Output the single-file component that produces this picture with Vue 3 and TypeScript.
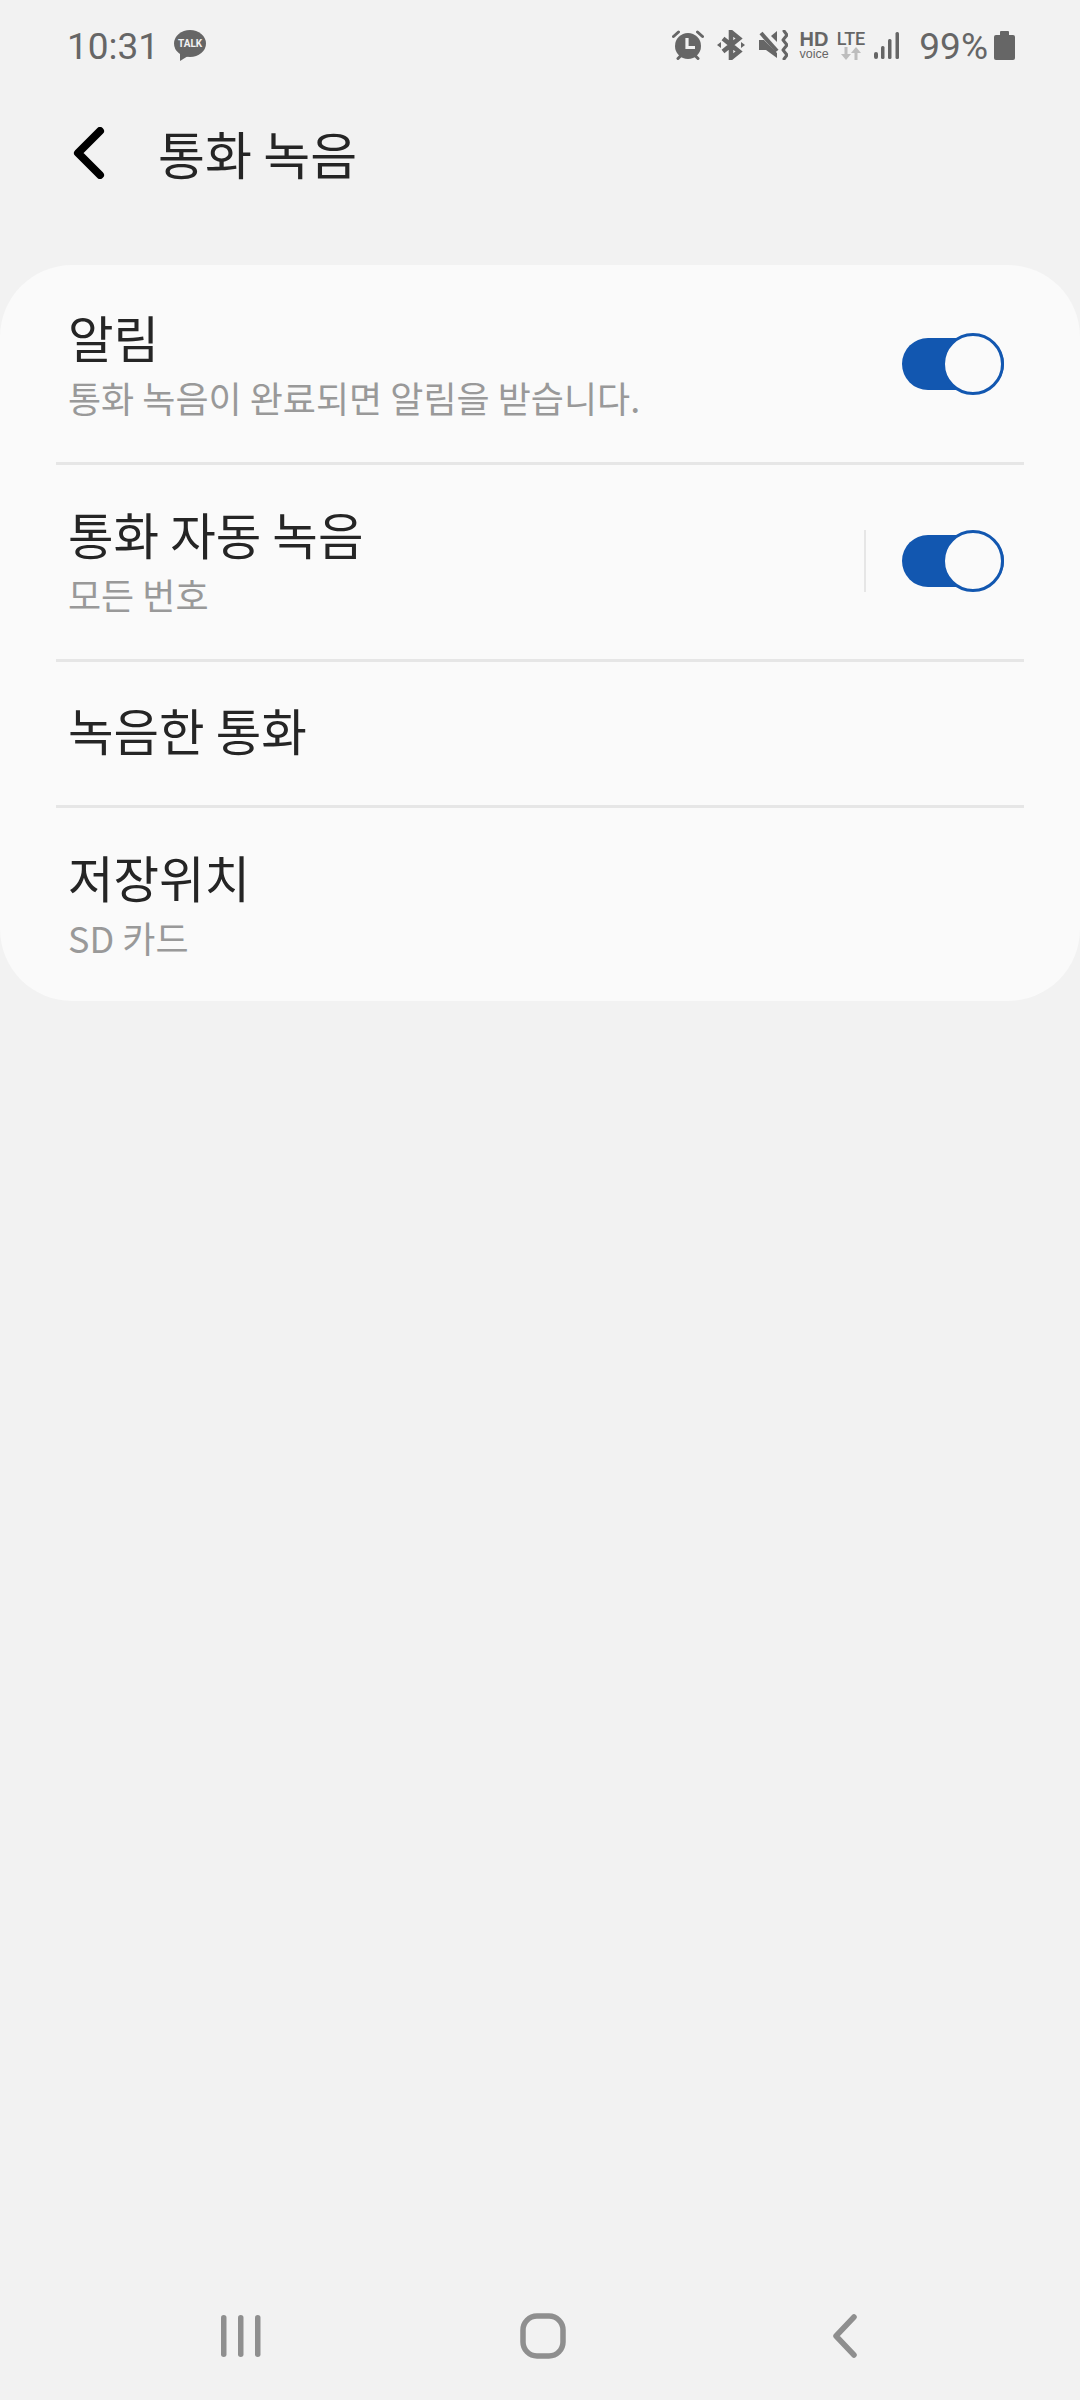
<script setup lang="ts">
// Call recording settings screen
interface SettingRow {
  title: string
  sub?: string
  toggle?: boolean
  split?: boolean
  height: number
}

const rows: SettingRow[] = [
  { title: '알림', sub: '통화 녹음이 완료되면 알림을 받습니다.', toggle: true, height: 197 },
  { title: '통화 자동 녹음', sub: '모든 번호', toggle: true, split: true, height: 197 },
  { title: '녹음한 통화', height: 146 },
  { title: '저장위치', sub: 'SD 카드', height: 196 },
]
</script>

<template>
  <div class="screen">
    <div class="status">
      <span class="time">10:31</span>
      <span class="talk">
        <svg width="32" height="31" viewBox="0 0 32 31">
          <ellipse cx="16" cy="13.5" rx="16" ry="13.5" fill="#666" />
          <path d="M6 23l0 8 8-5z" fill="#666" />
        </svg>
        <span class="talk-text">TALK</span>
      </span>
      <span class="spacer"></span>

      <svg class="ic-alarm" width="32" height="30" viewBox="0 0 32 30" fill="#666">
        <circle cx="16" cy="16" r="13" />
        <path d="M1.5 6.5l5-4.5M30.5 6.5l-5-4.5M6 28.5l3-3M26 28.5l-3-3" stroke="#666" stroke-width="3" stroke-linecap="round" />
        <path d="M15 8v9.5h8" fill="none" stroke="#f2f2f2" stroke-width="3.2" />
      </svg>
      <svg class="ic-bt" width="28" height="30" viewBox="0 0 28 30">
        <path d="M6 8.5l16 13-8 6.5V2l8 6.5-16 13" fill="none" stroke="#666" stroke-width="4.6" />
        <path d="M0 15l4-3v6zM28 15l-4-3v6z" fill="#666" />
      </svg>
      <svg class="ic-mute" width="29" height="30" viewBox="0 0 29 30" fill="#666">
        <path d="M0 10h5l13 13v5L7 20H0z" />
        <path d="M12 6l6-5v11z" />
        <path d="M2 3l16 18" stroke="#666" stroke-width="4" />
        <path d="M25 1l3 4-4 5 4 5-4 5 4 5-3 4" fill="none" stroke="#666" stroke-width="3" stroke-linecap="round" stroke-linejoin="round" />
      </svg>
      <span class="hd">
        <span class="hd-top">HD</span>
        <span class="hd-sub">voice</span>
      </span>
      <span class="lte">
        <span class="lte-top">LTE</span>
        <svg width="22" height="13" viewBox="0 0 22 13" fill="#bdbdbd" stroke="#bdbdbd" stroke-width="3">
          <path d="M6 0v8" />
          <path d="M1 7h10l-5 6z" stroke="none" />
          <path d="M16 13V5" />
          <path d="M11 6h10l-5-6z" stroke="none" />
        </svg>
      </span>
      <svg class="ic-signal" width="25" height="27" viewBox="0 0 25 27" fill="#666">
        <rect x="0" y="20" width="4" height="7" rx="2" />
        <rect x="7" y="14" width="3.5" height="13" rx="1.5" />
        <rect x="14" y="7" width="3.5" height="20" rx="1.5" />
        <rect x="21.5" y="0" width="3.5" height="27" rx="1.5" />
      </svg>
      <span class="pct">99%</span>
      <svg class="ic-batt" width="21" height="29" viewBox="0 0 21 29" fill="#666">
        <rect x="0" y="4" width="21" height="25" rx="2" />
        <rect x="6" y="0" width="9" height="5" rx="1" />
      </svg>
    </div>

    <div class="appbar">
      <svg class="back" width="34" height="52" viewBox="0 0 34 52">
        <path d="M28 4L6 26l22 22" fill="none" stroke="#000" stroke-width="8" stroke-linecap="round" stroke-linejoin="round" />
      </svg>
      <span class="page-title">통화 녹음</span>
    </div>

    <div class="card">
      <div
        v-for="(row, i) in rows"
        :key="row.title"
        class="row"
        :class="{ 'row--single': !row.sub }"
        :style="{ height: row.height + 'px' }"
      >
        <div v-if="i > 0" class="divider"></div>
        <div class="labels">
          <div class="title">{{ row.title }}</div>
          <div v-if="row.sub" class="sub">{{ row.sub }}</div>
        </div>
        <div v-if="row.split" class="split"></div>
        <div v-if="row.toggle" class="toggle">
          <span class="thumb"></span>
        </div>
      </div>
    </div>

    <div class="navbar">
      <svg class="nav-recent" width="52" height="44" viewBox="0 0 52 44" fill="#8f8f8f">
        <rect x="2" y="1" width="5.5" height="42" rx="2.75" />
        <rect x="19" y="1" width="5.5" height="42" rx="2.75" />
        <rect x="36" y="1" width="5.5" height="42" rx="2.75" />
      </svg>
      <svg class="nav-home" width="46" height="46" viewBox="0 0 46 46">
        <rect x="3" y="3" width="40" height="40" rx="14" fill="none" stroke="#8f8f8f" stroke-width="5.5" />
      </svg>
      <svg class="nav-back" width="26" height="44" viewBox="0 0 26 44">
        <path d="M22 3L4 22l18 19" fill="none" stroke="#8f8f8f" stroke-width="5.5" stroke-linecap="round" stroke-linejoin="round" />
      </svg>
    </div>
  </div>
</template>

<style>
html,
body {
  margin: 0;
  background: #f2f2f2;
}
</style>

<style scoped>
.screen {
  position: relative;
  display: flex;
  flex-direction: column;
  width: 1080px;
  height: 2400px;
  background: #f2f2f2;
  font-family: "Noto Sans CJK KR", "Noto Sans", sans-serif;
  overflow: hidden;
}
.status {
  display: flex;
  align-items: center;
  height: 90px;
  padding: 0 65px 0 67px;
  box-sizing: border-box;
  color: #666;
}
.time {
  margin-top: 3px;
  font-family: Roboto, sans-serif;
  font-size: 37px;
  line-height: 90px;
}
.talk {
  position: relative;
  display: flex;
  margin-left: 15px;
}
.talk-text {
  position: absolute;
  left: 0;
  top: 7px;
  width: 32px;
  text-align: center;
  font-family: Roboto, sans-serif;
  font-weight: 700;
  font-size: 10px;
  line-height: 13px;
  color: #f2f2f2;
}
.spacer {
  flex: 1;
}
.ic-bt {
  margin-left: 13px;
}
.ic-mute {
  margin-left: 14px;
}
.hd {
  display: flex;
  flex-direction: column;
  align-items: center;
  margin-left: 11px;
  font-family: "Liberation Sans", sans-serif;
}
.hd-top {
  font-weight: 700;
  font-size: 20px;
  line-height: 19px;
}
.hd-sub {
  font-size: 12.5px;
  line-height: 11px;
}
.lte {
  display: flex;
  flex-direction: column;
  align-items: center;
  margin-left: 8px;
}
.lte-top {
  font-family: Roboto, sans-serif;
  font-weight: 500;
  font-size: 18px;
  line-height: 17px;
}
.ic-signal {
  margin-left: 9px;
}
.pct {
  margin-top: 3px;
  margin-left: 20px;
  font-family: Roboto, sans-serif;
  font-size: 37px;
  line-height: 90px;
}
.ic-batt {
  margin-left: 6px;
}
.appbar {
  display: flex;
  align-items: center;
  height: 125px;
  padding-left: 72px;
}
.page-title {
  margin-left: 52px;
  font-size: 51px;
  line-height: 60px;
  color: #252525;
}
.card {
  display: flex;
  flex-direction: column;
  margin-top: 50px;
  background: #fafafa;
  border-radius: 72px;
}
.divider {
  position: absolute;
  left: 56px;
  right: 56px;
  top: 0;
  height: 3px;
  background: #e6e6e6;
}
.row {
  position: relative;
  display: flex;
  align-items: center;
  padding: 0 76px 0 68px;
}
.row--single {
  padding-bottom: 4px;
  box-sizing: border-box;
}
.labels {
  flex: 1;
}
.title {
  font-size: 49.5px;
  line-height: 60px;
  color: #252525;
}
.sub {
  margin-top: 7px;
  font-size: 36px;
  line-height: 46px;
  color: #999;
}
.split {
  width: 2px;
  height: 62px;
  margin-right: 36px;
  background: #e6e6e6;
}
.toggle {
  position: relative;
  width: 102px;
  height: 52px;
  border-radius: 26px;
  background: #1257b0;
}
.thumb {
  position: absolute;
  right: 0;
  top: -5px;
  width: 62px;
  height: 62px;
  box-sizing: border-box;
  border: 3px solid #1257b0;
  border-radius: 50%;
  background: #fafafa;
}
.navbar {
  position: absolute;
  left: 0;
  top: 2313px;
  display: flex;
  align-items: center;
  height: 46px;
  padding-left: 219px;
}
.nav-home {
  margin-left: 249px;
}
.nav-back {
  margin-left: 266px;
}
</style>
